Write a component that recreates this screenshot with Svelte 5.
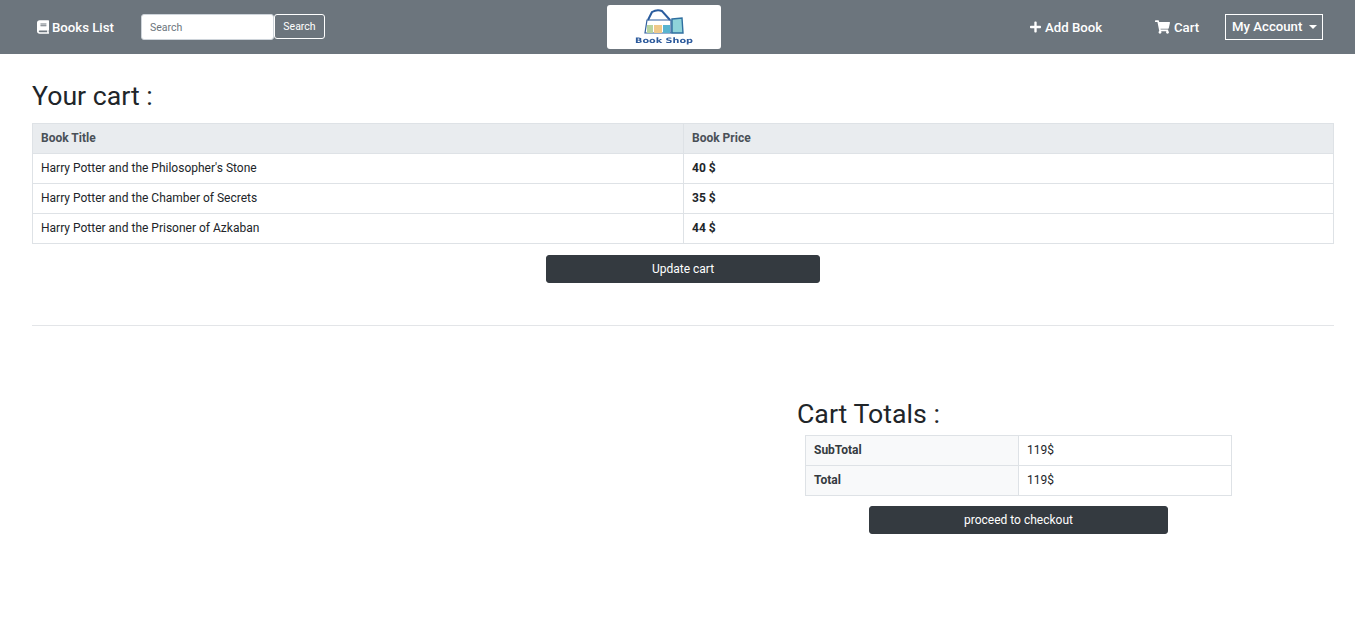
<script>
  const books = [
    { title: "Harry Potter and the Philosopher's Stone", price: 40 },
    { title: "Harry Potter and the Chamber of Secrets", price: 35 },
    { title: "Harry Potter and the Prisoner of Azkaban", price: 44 },
  ];
  const total = books.reduce((sum, b) => sum + b.price, 0);
</script>

<nav class="navbar">
  <a class="nav-link books" href="#books">
    <svg class="icon" width="12" height="14" viewBox="0 0 448 512" fill="currentColor">
      <path d="M448 360V24c0-13.300-10.700-24-24-24H96C43 0 0 43 0 96v320c0 53 43 96 96 96h328c13.300 0 24-10.700 24-24v-16c0-7.500-3.500-14.300-8.900-18.700-4.200-15.400-4.200-59.300 0-74.700 5.400-4.300 8.900-11.100 8.900-18.600zM128 134c0-3.300 2.700-6 6-6h212c3.300 0 6 2.700 6 6v20c0 3.300-2.700 6-6 6H134c-3.300 0-6-2.700-6-6v-20zm0 64c0-3.300 2.700-6 6-6h212c3.300 0 6 2.700 6 6v20c0 3.300-2.700 6-6 6H134c-3.300 0-6-2.700-6-6v-20zm253.400 250H96c-17.700 0-32-14.300-32-32 0-17.600 14.400-32 32-32h285.400c-1.900 17.100-1.900 46.900 0 64z"/>
    </svg>
    Books List
  </a>
  <form class="search" on:submit|preventDefault>
    <input type="text" placeholder="Search" />
    <button type="submit">Search</button>
  </form>
  <div class="logo">
    <svg width="114" height="44" viewBox="0 0 114 44" fill="none">
      <g class="logo-art">
        <path d="M41 15 L45 7 Q50 4 55 6 L63 15" stroke="#2a5c9e" stroke-width="2"/>
        <path d="M40 15 L64 15 L64 28 L38 28 Z" stroke="#2f5f9e" stroke-width="1.200"/>
        <rect x="40" y="20" width="6" height="8" fill="#b7d3a0"/>
        <rect x="47" y="20" width="8" height="8" fill="#efc98a"/>
        <rect x="56" y="20" width="7" height="8" fill="#58b4d0"/>
        <path d="M65 14 L75 13 L76 28 L65 28 Z" fill="#8fd3da" stroke="#2f6fa0" stroke-width="1.400"/>
        <text x="28" y="38" textLength="58" lengthAdjust="spacingAndGlyphs" class="logo-text">Book Shop</text>
      </g>
    </svg>
  </div>
  <a class="nav-link add" href="#add">
    <svg class="icon" width="11" height="14" viewBox="0 0 448 512" fill="currentColor">
      <path d="M416 208H272V64c0-17.670-14.330-32-32-32h-32c-17.670 0-32 14.330-32 32v144H32c-17.670 0-32 14.330-32 32v32c0 17.670 14.330 32 32 32h144v144c0 17.670 14.330 32 32 32h32c17.670 0 32-14.330 32-32V304h144c17.670 0 32-14.330 32-32v-32c0-17.670-14.330-32-32-32z"/>
    </svg>
    Add Book
  </a>
  <a class="nav-link cart" href="#cart">
    <svg class="icon" width="15" height="14" viewBox="0 0 576 512" fill="currentColor">
      <path d="M528.120 301.319l47.273-208C578.806 78.301 567.391 64 551.990 64H159.208l-9.166-44.810C147.758 8.021 137.930 0 126.529 0H24C10.745 0 0 10.745 0 24v16c0 13.255 10.745 24 24 24h69.883l70.248 343.435C147.325 417.100 136 435.222 136 456c0 30.928 25.072 56 56 56s56-25.072 56-56c0-15.674-6.447-29.835-16.824-40h209.647C430.447 426.165 424 440.326 424 456c0 30.928 25.072 56 56 56s56-25.072 56-56c0-22.172-12.888-41.332-31.579-50.405l5.517-24.276c3.413-15.018-8.002-29.319-23.403-29.319H218.117l-6.545-32h293.145c11.206 0 20.920-7.754 23.403-18.681z"/>
    </svg>
    Cart
  </a>
  <button class="account">My Account<span class="caret"></span></button>
</nav>

<main class="container">
  <h3 class="heading">Your cart :</h3>
  <table class="cart-table">
    <thead>
      <tr>
        <th>Book Title</th>
        <th>Book Price</th>
      </tr>
    </thead>
    <tbody>
      {#each books as book}
        <tr>
          <td>{book.title}</td>
          <td><b>{book.price} $</b></td>
        </tr>
      {/each}
    </tbody>
  </table>
  <button class="btn-dark update">Update cart</button>
  <hr />

  <section class="totals">
    <h3 class="heading">Cart Totals :</h3>
    <table class="totals-table">
      <tbody>
        <tr>
          <th>SubTotal</th>
          <td>{total}$</td>
        </tr>
        <tr>
          <th>Total</th>
          <td>{total}$</td>
        </tr>
      </tbody>
    </table>
    <button class="btn-dark checkout">proceed to checkout</button>
  </section>
</main>

<style>
  :global(body) {
    margin: 0;
    background: #fff;
    font-family: Roboto, "Liberation Sans", sans-serif;
    color: #212529;
  }

  .navbar {
    display: flex;
    align-items: center;
    height: 54px;
    background: #6c757d;
    padding-left: 37px;
    box-sizing: border-box;
  }

  .nav-link {
    display: flex;
    align-items: center;
    gap: 3px;
    color: #fff;
    font-size: 13.200px;
    font-weight: 500;
    text-decoration: none;
  }

  .books {
    width: 104px;
  }

  .search {
    display: flex;
  }

  .search input {
    width: 133px;
    height: 26px;
    box-sizing: border-box;
    padding: 0 8px;
    border: 1px solid #ced4da;
    border-radius: 3px;
    font: 10.500px Roboto, sans-serif;
    background: #fff;
  }

  .search input::placeholder {
    color: #6c757d;
  }

  .search button {
    width: 51px;
    height: 25px;
    box-sizing: border-box;
    padding: 0;
    border: 1px solid #fff;
    border-radius: 3px;
    background: transparent;
    color: #fff;
    font: 400 10.500px Roboto, sans-serif;
  }

  .logo {
    width: 114px;
    height: 44px;
    margin-left: 282px;
    background: #fff;
    border-radius: 3px;
    overflow: hidden;
  }

  .logo svg {
    display: block;
  }

  .logo-art {
    filter: blur(0.4px);
  }

  .logo-text {
    font: bold 7.500px "DejaVu Sans", sans-serif;
    fill: #2c5a9c;
  }

  .add {
    margin-left: 309px;
    width: 125px;
    gap: 4px;
  }

  .cart {
    width: 70px;
    gap: 4px;
  }

  .account {
    display: flex;
    align-items: center;
    width: 98px;
    height: 26px;
    box-sizing: border-box;
    padding: 0 0 1px 6px;
    border: 1px solid #fff;
    border-radius: 0;
    background: transparent;
    color: #fff;
    font: 500 13.200px Roboto, sans-serif;
  }

  .caret {
    margin-left: 7px;
    border-top: 4px solid #fff;
    border-left: 4px solid transparent;
    border-right: 4px solid transparent;
  }

  .container {
    padding: 25px 21px 0 32px;
  }

  .heading {
    margin: 0 0 10px;
    font-size: 26.700px;
    font-weight: 400;
    line-height: 34px;
    color: #212529;
  }

  table {
    border-collapse: collapse;
    table-layout: fixed;
    font-size: 12px;
  }

  th,
  td {
    height: 30px;
    box-sizing: border-box;
    padding: 0 8px 2px;
    border: 1px solid #dee2e6;
    text-align: left;
  }

  .cart-table {
    width: 100%;
  }

  .cart-table thead th {
    background: #e9ecef;
    color: #495057;
    font-weight: 700;
  }

  .cart-table td:last-child,
  .cart-table th:last-child {
    padding-left: 8.500px;
  }

  .btn-dark {
    display: block;
    height: 28px;
    padding: 0;
    border: 1px solid #343a40;
    border-radius: 3px;
    background: #343a40;
    color: #fff;
    font: 400 12px Roboto, sans-serif;
  }

  .update {
    width: 274px;
    margin: 11px auto 0 514px;
  }

  hr {
    margin: 42px 0 0;
    border: 0;
    border-top: 1px solid #e3e5e8;
  }

  .totals {
    width: 443px;
    margin: 71px 0 0 765px;
  }

  .totals .heading {
    margin-bottom: 4px;
  }

  .totals-table {
    width: 427px;
    margin: 0 8px;
  }

  .totals-table th {
    background: #f8f9fa;
    color: #343a40;
    font-weight: 700;
  }

  .checkout {
    width: 299px;
    margin: 10px 0 0 72px;
  }
</style>
